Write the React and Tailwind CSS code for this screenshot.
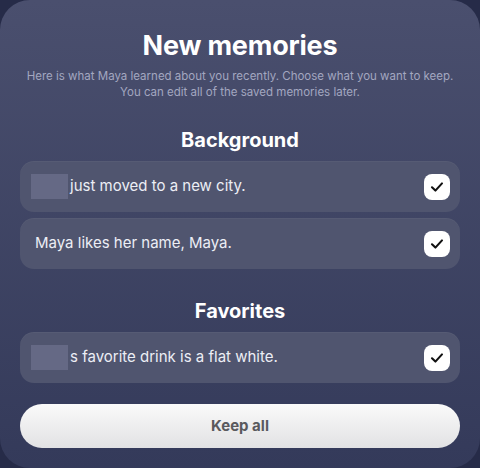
import React from "react";

function Check() {
  return (
    <div className="flex h-[26px] w-[26px] shrink-0 items-center justify-center rounded-[8px] bg-white">
      <svg width="16" height="16" viewBox="0 0 16 16" fill="none">
        <path d="M3 8.3 L6.4 11.6 L13 4.4" stroke="#111" strokeWidth="2.1" strokeLinecap="round" strokeLinejoin="round" />
      </svg>
    </div>
  );
}

function Row({ redacted, text }) {
  return (
    <div className="flex h-[51px] items-center justify-between rounded-[14px] bg-[#50556f] pl-[11px] pr-[10px] shadow-[inset_0_1px_0_rgba(255,255,255,0.04)]">
      <div className="flex items-center text-[15px] text-[#eceef5]">
        {redacted && <span className="mr-[2px] inline-block h-[25px] w-[37px] bg-[#656985]" />}
        <span className={redacted ? "" : "pl-[4px]"}>{text}</span>
      </div>
      <Check />
    </div>
  );
}

export default function App() {
  return (
    <div className="h-[468px] w-[480px] bg-[#262b48]" style={{ fontFamily: "Inter, Lato, sans-serif" }}>
      <div className="flex h-full w-full flex-col rounded-[30px] bg-gradient-to-b from-[#4a4f6e] to-[#343a5a] px-[20px] pt-[30px]">
        <h1 className="text-center text-[27px] font-bold leading-[32px] tracking-[-0.2px] text-white">New memories</h1>
        <p className="mt-[6px] text-center text-[11.5px] leading-[16px] text-[#a3a7c0]">
          Here is what Maya learned about you recently. Choose what you want to keep.
          <br />
          You can edit all of the saved memories later.
        </p>
        <h2 className="mt-[26px] text-center text-[20px] font-bold leading-[28px] text-white">Background</h2>
        <div className="mt-[7px] flex flex-col gap-[6px]">
          <Row redacted text="just moved to a new city." />
          <Row text="Maya likes her name, Maya." />
        </div>
        <h2 className="mt-[28px] text-center text-[20px] font-bold leading-[28px] text-white">Favorites</h2>
        <div className="mt-[7px] flex flex-col">
          <Row redacted text="s favorite drink is a flat white." />
        </div>
        <button className="mt-[21px] flex h-[44px] items-center justify-center rounded-full bg-gradient-to-b from-[#fafafa] to-[#e2e2e4] text-[15px] font-bold text-[#5a5a5e]">
          Keep all
        </button>
      </div>
    </div>
  );
}
